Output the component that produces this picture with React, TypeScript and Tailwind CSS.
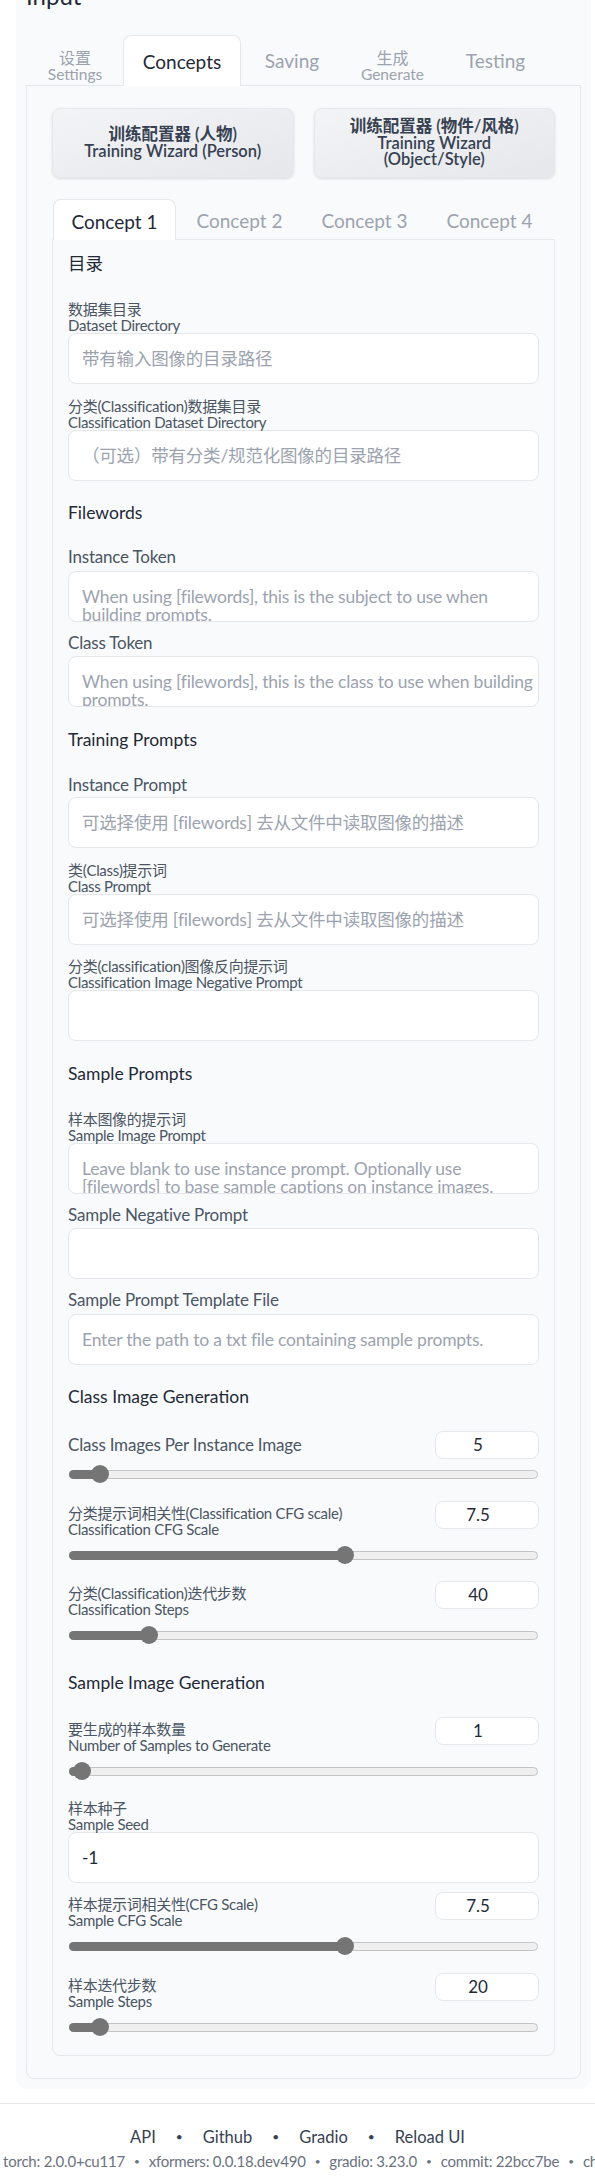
import React from "react";

const font = "font-['Lato','Noto_Sans_CJK_SC',sans-serif]";

type Item =
  | { kind: "h"; text: string; mt: number }
  | { kind: "field"; zh?: string; en: string; mt: number; gap?: number; lines?: string[]; value?: string }
  | { kind: "slider"; zh?: string; en: string; mt: number; value: string; pos: number };

const items: Item[] = [
  { kind: "h", text: "目录", mt: 0 },
  { kind: "field", zh: "数据集目录", en: "Dataset Directory", mt: 25, lines: ["带有输入图像的目录路径"] },
  { kind: "field", zh: "分类(Classification)数据集目录", en: "Classification Dataset Directory", mt: 14, lines: ["（可选）带有分类/规范化图像的目录路径"] },
  { kind: "h", text: "Filewords", mt: 20 },
  { kind: "field", en: "Instance Token", mt: 22, gap: 4, lines: ["When using [filewords], this is the subject to use when", "building prompts."] },
  { kind: "field", en: "Class Token", mt: 11, gap: 3, lines: ["When using [filewords], this is the class to use when building", "prompts."] },
  { kind: "h", text: "Training Prompts", mt: 21 },
  { kind: "field", en: "Instance Prompt", mt: 23, gap: 2, lines: ["可选择使用 [filewords] 去从文件中读取图像的描述"] },
  { kind: "field", zh: "类(Class)提示词", en: "Class Prompt", mt: 14, lines: ["可选择使用 [filewords] 去从文件中读取图像的描述"] },
  { kind: "field", zh: "分类(classification)图像反向提示词", en: "Classification Image Negative Prompt", mt: 13, lines: [] },
  { kind: "h", text: "Sample Prompts", mt: 21 },
  { kind: "field", zh: "样本图像的提示词", en: "Sample Image Prompt", mt: 25, lines: ["Leave blank to use instance prompt. Optionally use", "[filewords] to base sample captions on instance images."] },
  { kind: "field", en: "Sample Negative Prompt", mt: 11, gap: 3, lines: [] },
  { kind: "field", en: "Sample Prompt Template File", mt: 11, gap: 4, lines: ["Enter the path to a txt file containing sample prompts."] },
  { kind: "h", text: "Class Image Generation", mt: 20 },
  { kind: "slider", en: "Class Images Per Instance Image", mt: 22, value: "5", pos: 32 },
  { kind: "slider", zh: "分类提示词相关性(Classification CFG scale)", en: "Classification CFG Scale", mt: 18, value: "7.5", pos: 277 },
  { kind: "slider", zh: "分类(Classification)迭代步数", en: "Classification Steps", mt: 17, value: "40", pos: 81 },
  { kind: "h", text: "Sample Image Generation", mt: 27 },
  { kind: "slider", zh: "要生成的样本数量", en: "Number of Samples to Generate", mt: 22, value: "1", pos: 14 },
  { kind: "field", zh: "样本种子", en: "Sample Seed", mt: 20, value: "-1" },
  { kind: "slider", zh: "样本提示词相关性(CFG Scale)", en: "Sample CFG Scale", mt: 9, value: "7.5", pos: 277 },
  { kind: "slider", zh: "样本迭代步数", en: "Sample Steps", mt: 18, value: "20", pos: 32 },
];

function Label2({ zh, en }: { zh: string; en: string }) {
  return (
    <div className="text-[15px] leading-[16px] tracking-[-0.3px] text-[#4b5563]">
      <div className="whitespace-nowrap">{zh}</div>
      <div className="whitespace-nowrap">{en}</div>
    </div>
  );
}

function Label1({ text }: { text: string }) {
  return <div className="whitespace-nowrap text-[17px] leading-[20px] tracking-[-0.2px] text-[#4b5563]">{text}</div>;
}

function Box({ lines, value }: { lines?: string[]; value?: string }) {
  return (
    <div className="h-[51px] overflow-hidden rounded-lg border border-[#e5e7eb] bg-white px-[13px] pt-[16px] text-[17.5px] leading-[17.5px] tracking-[-0.2px] text-[#9ca3af]">
      {value ? (
        <div className="text-[#1f2937]">{value}</div>
      ) : (
        (lines || []).map((l, i) => (
          <div key={i} className="whitespace-nowrap">
            {l}
          </div>
        ))
      )}
    </div>
  );
}

function Slider({ pos }: { pos: number }) {
  return (
    <div className="relative h-[18px]">
      <div className="absolute left-[1px] right-[1px] top-[4.5px] h-[9px] rounded-full border border-[#c4c4c4] bg-[#efefef]" />
      <div className="absolute left-[1px] top-[4.5px] h-[9px] rounded-full bg-[#757575]" style={{ width: pos }} />
      <div className="absolute top-0 h-[18px] w-[18px] rounded-full bg-[#757575]" style={{ left: pos - 9 }} />
    </div>
  );
}

function Row({ item }: { item: Item }) {
  if (item.kind === "h") {
    return (
      <div style={{ marginTop: item.mt }} className="text-[17.5px] leading-[24px] text-[#1f2937]">
        {item.text}
      </div>
    );
  }
  if (item.kind === "field") {
    return (
      <div style={{ marginTop: item.mt }}>
        {item.zh ? <Label2 zh={item.zh} en={item.en} /> : <Label1 text={item.en} />}
        <div style={{ marginTop: item.gap || 0 }}>
          <Box lines={item.lines} value={item.value} />
        </div>
      </div>
    );
  }
  return (
    <div style={{ marginTop: item.mt }}>
      <div className="flex justify-between">
        {item.zh ? (
          <div className="pt-[4px]">
            <Label2 zh={item.zh} en={item.en} />
          </div>
        ) : (
          <div className="flex h-[28px] items-center">
            <Label1 text={item.en} />
          </div>
        )}
        <div className="h-[28px] w-[104px] rounded-lg border border-[#e5e7eb] bg-white pr-[18px] text-center text-[17px] leading-[26px] text-[#1f2937]">
          {item.value}
        </div>
      </div>
      <div className={item.zh ? "mt-[9px]" : "mt-[6px]"}>
        <Slider pos={item.pos} />
      </div>
    </div>
  );
}

export default function App() {
  const topTabs = [
    { zh: "设置", en: "Settings", w: "w-[96px]" },
    { en: "Concepts", w: "w-[118px]", active: true },
    { en: "Saving", w: "w-[102px]" },
    { zh: "生成", en: "Generate", w: "w-[99px]" },
    { en: "Testing", w: "w-[107px]" },
  ];

  return (
    <div className={`${font} min-h-[2176px] w-[595px] overflow-hidden bg-white`}>
      {/* outer gray block */}
      <div className="-mt-[19px] mr-[4px] ml-[16px] rounded-b-xl bg-[#f9fafb] px-[10px] pb-[10px]">
        <div className="text-[24px] leading-[30px] text-[#1f2937]">Input</div>

        <div className="mt-[24px] flex h-[50px] pl-[1px]">
          {topTabs.map((t) =>
            t.active ? (
              <div
                key={t.en}
                className={`${t.w} relative z-10 h-[51px] rounded-t-lg border border-b-0 border-[#e5e7eb] bg-white pt-[14px] text-center text-[19px] leading-[24px] text-[#1f2937]`}
              >
                {t.en}
              </div>
            ) : t.zh ? (
              <div key={t.en} className={`${t.w} pt-[15px] text-center leading-[16px] text-[#9ca3af]`}>
                <div className="text-[16px]">{t.zh}</div>
                <div className="text-[15.5px]">{t.en}</div>
              </div>
            ) : (
              <div key={t.en} className={`${t.w} pt-[14px] text-center text-[19px] leading-[24px] text-[#9ca3af]`}>
                {t.en}
              </div>
            )
          )}
        </div>

        <div className="rounded-b-lg border border-[#e5e7eb] bg-[#f9fafb] px-[25px] pt-[22px] pb-[22px]">
          <div className="grid grid-cols-2 gap-[20px]">
            <button className="flex h-[70px] flex-col items-center justify-center rounded-lg border border-[#e5e7eb] bg-gradient-to-br from-[#f3f4f6] to-[#e5e7eb] text-[16.5px] leading-[17px] font-semibold text-[#374151] shadow-sm">
              <span>训练配置器 (人物)</span>
              <span>Training Wizard (Person)</span>
            </button>
            <button className="flex h-[70px] flex-col items-center justify-center rounded-lg border border-[#e5e7eb] bg-gradient-to-br from-[#f3f4f6] to-[#e5e7eb] text-[16.5px] leading-[16.5px] font-semibold text-[#374151] shadow-sm">
              <span>训练配置器 (物件/风格)</span>
              <span>Training Wizard</span>
              <span>(Object/Style)</span>
            </button>
          </div>

          <div className="mt-[21px] flex h-[40px]">
            {["Concept 1", "Concept 2", "Concept 3", "Concept 4"].map((c, i) =>
              i === 0 ? (
                <div
                  key={c}
                  className="relative z-10 ml-[1px] h-[41px] w-[123px] rounded-t-lg border border-b-0 border-[#e5e7eb] bg-white pt-[10px] text-center text-[19px] leading-[24px] text-[#1f2937]"
                >
                  {c}
                </div>
              ) : (
                <div key={c} className={`${i === 1 ? "ml-[1px]" : ""} w-[125px] pt-[10px] text-center text-[19px] leading-[24px] text-[#9ca3af]`}>
                  {c}
                </div>
              )
            )}
          </div>

          <div className="rounded-b-lg border border-[#e5e7eb] bg-[#f9fafb] px-[15px] pt-[12px] pb-[19px]">
            {items.map((it, i) => (
              <Row key={i} item={it} />
            ))}
          </div>
        </div>
      </div>

      {/* footer */}
      <div className="mt-[14px] border-t border-[#e5e7eb] pt-[21px]">
        <div className="flex justify-center gap-[20px] text-[16.5px] leading-[24px] text-[#374151]">
          <span>API</span>
          <span className="text-[12px]">•</span>
          <span>Github</span>
          <span className="text-[12px]">•</span>
          <span>Gradio</span>
          <span className="text-[12px]">•</span>
          <span>Reload UI</span>
        </div>
        <div className="mt-[2px] flex gap-[9px] whitespace-nowrap pl-[3px] text-[15px] leading-[20px] tracking-[-0.2px] text-[#6b7280]">
          <span>torch: 2.0.0+cu117</span>
          <span className="text-[10px]">•</span>
          <span>xformers: 0.0.18.dev490</span>
          <span className="text-[10px]">•</span>
          <span>gradio: 3.23.0</span>
          <span className="text-[10px]">•</span>
          <span>commit: 22bcc7be</span>
          <span className="text-[10px]">•</span>
          <span>checkpoint: a9fed7c364</span>
        </div>
      </div>
    </div>
  );
}
